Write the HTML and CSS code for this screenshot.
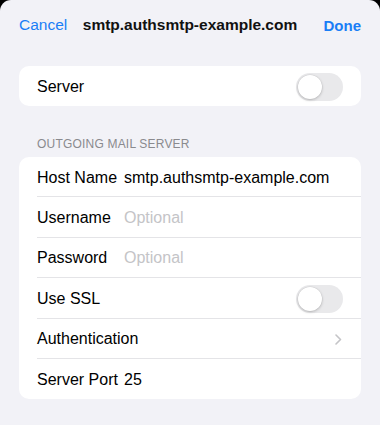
FILE: index.html
```html
<!DOCTYPE html>
<html lang="en">
<head>
<meta charset="utf-8">
<title>SMTP Server</title>
<link rel="stylesheet" href="styles.css">
</head>
<body>
<div class="sheet">
  <div class="nav">
    <span class="nav-btn">Cancel</span>
    <span class="nav-title">smtp.authsmtp-example.com</span>
    <span class="nav-btn done">Done</span>
  </div>

  <div class="card single">
    <div class="row">
      <div class="row-inner">
        <span class="label-wide">Server</span>
        <span class="toggle"><span class="knob"></span></span>
      </div>
    </div>
  </div>

  <div class="section-header">OUTGOING MAIL SERVER</div>

  <div class="card">
    <div class="row">
      <div class="row-inner">
        <span class="label">Host Name</span>
        <span class="value">smtp.authsmtp-example.com</span>
      </div>
    </div>
    <div class="row">
      <div class="row-inner">
        <span class="label">Username</span>
        <span class="value placeholder">Optional</span>
      </div>
    </div>
    <div class="row">
      <div class="row-inner">
        <span class="label">Password</span>
        <span class="value placeholder">Optional</span>
      </div>
    </div>
    <div class="row">
      <div class="row-inner">
        <span class="label-wide">Use SSL</span>
        <span class="toggle"><span class="knob"></span></span>
      </div>
    </div>
    <div class="row">
      <div class="row-inner">
        <span class="label-wide">Authentication</span>
        <svg class="chevron" width="7" height="11" viewBox="0 0 7 11"><path d="M1 1 L5.5 5.5 L1 10" fill="none" stroke="#c4c4c7" stroke-width="1.6" stroke-linecap="round" stroke-linejoin="round"/></svg>
      </div>
    </div>
    <div class="row last">
      <div class="row-inner">
        <span class="label">Server Port</span>
        <span class="value">25</span>
      </div>
    </div>
  </div>
</div>
</body>
</html>
```

FILE: styles.css
```css
* { box-sizing: border-box; }

html, body {
  margin: 0;
  padding: 0;
  background: #000;
}

body {
  font-family: "Liberation Sans", Arial, sans-serif;
  color: #000;
}

.sheet {
  background: #f2f2f7;
  border-radius: 11px 11px 0 0;
  min-height: 425px;
  padding: 0 19px;
  overflow: hidden;
}

.nav {
  height: 50px;
  display: grid;
  grid-template-columns: 1fr auto 1fr;
  align-items: center;
}

.nav-btn {
  color: #1a7ef6;
  font-size: 15.5px;
  justify-self: start;
}

.nav-btn.done {
  font-weight: 700;
  font-size: 15px;
  justify-self: end;
}

.nav-title {
  font-weight: 700;
  font-size: 15.5px;
  color: #111;
  white-space: nowrap;
}

.card {
  background: #fff;
  border-radius: 10px;
  overflow: hidden;
}

.card.single {
  margin-top: 16px;
}

.row {
  padding-left: 18px;
}

.row-inner {
  height: 40.4px;
  display: flex;
  align-items: center;
  padding-right: 18px;
  padding-top: 1px;
  box-shadow: inset 0 -1px 0 #e4e4e7;
  font-size: 16px;
}

.single .row-inner,
.row.last .row-inner {
  box-shadow: none;
}

.single .row-inner {
  height: 40px;
}

.label {
  width: 87px;
  flex: none;
  white-space: nowrap;
}

.label-wide {
  flex: 1;
}

.value {
  white-space: nowrap;
}

.placeholder {
  color: #c4c4c7;
}

.toggle {
  width: 47px;
  height: 28px;
  border-radius: 14px;
  background: #e9e9eb;
  position: relative;
  flex: none;
}

.knob {
  position: absolute;
  left: 2px;
  top: 2px;
  width: 24px;
  height: 24px;
  border-radius: 50%;
  background: #fff;
  box-shadow: 0 1px 3px rgba(0, 0, 0, 0.22), 0 0 0 0.5px rgba(0, 0, 0, 0.06);
}

.chevron {
  flex: none;
  margin-right: 1px;
}

.section-header {
  padding: 30px 0 5px 18px;
  font-size: 12px;
  line-height: 16px;
  color: #8a8a8e;
  letter-spacing: 0.2px;
}
```
